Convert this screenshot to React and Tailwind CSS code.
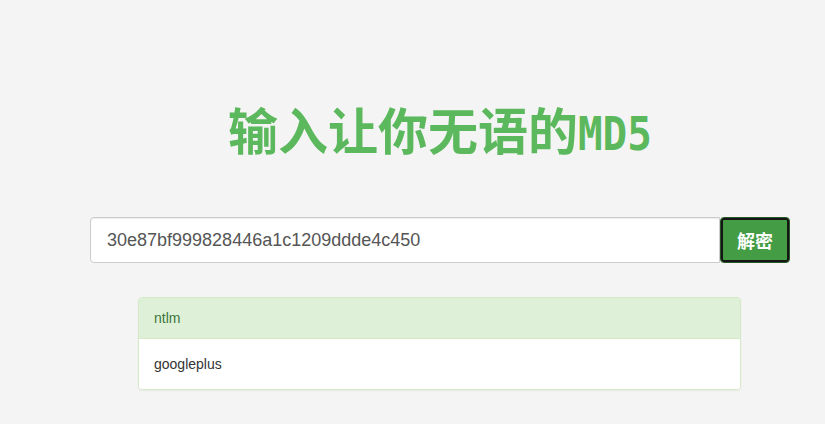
export default function App() {
  return (
    <div className="min-h-screen w-full bg-[#f4f4f4] font-['Liberation_Sans',sans-serif]">
      <div className="ml-[90px] w-[700px] pt-[100px]">
        <h1 className="h-[56px] text-center text-[50px] font-bold text-[#5cb85c] leading-[56px] font-['Noto_Sans_CJK_SC',sans-serif] whitespace-nowrap">
          <span>输入让你无语的</span>
          <span className="inline-block w-[74px] text-left overflow-visible">
            <span className="inline-block origin-left scale-x-[0.87] font-['DejaVu_Sans_Mono',monospace] text-[47px]">MD5</span>
          </span>
        </h1>
        <div className="mt-[61px] flex h-[46px]">
          <div className="flex-1 h-full border border-[#cccccc] rounded-l-[4px] bg-white shadow-[inset_0_1px_1px_rgba(0,0,0,0.075)] flex items-center px-[16px] text-[18px] text-[#555555]">
            30e87bf999828446a1c1209ddde4c450
          </div>
          <button className="w-[70px] h-full rounded-[4px] border border-[#255625] bg-[#449d44] shadow-[inset_0_0_0_2px_#151515] text-white text-[18px] font-bold flex items-center justify-center font-['Noto_Sans_CJK_SC',sans-serif]">
            解密
          </button>
        </div>
        <div className="mt-[34px] mx-[48px] w-[603px] rounded-[4px] border border-[#d6e9c6] overflow-hidden text-[14px] shadow-[0_1px_2px_rgba(0,0,0,0.05)]">
          <div className="h-[41px] flex items-center px-[15px] bg-[#dff0d8] text-[#3c763d] border-b border-[#d6e9c6]">ntlm</div>
          <div className="h-[50px] flex items-center px-[15px] bg-white text-[#333333]">googleplus</div>
        </div>
      </div>
    </div>
  );
}
